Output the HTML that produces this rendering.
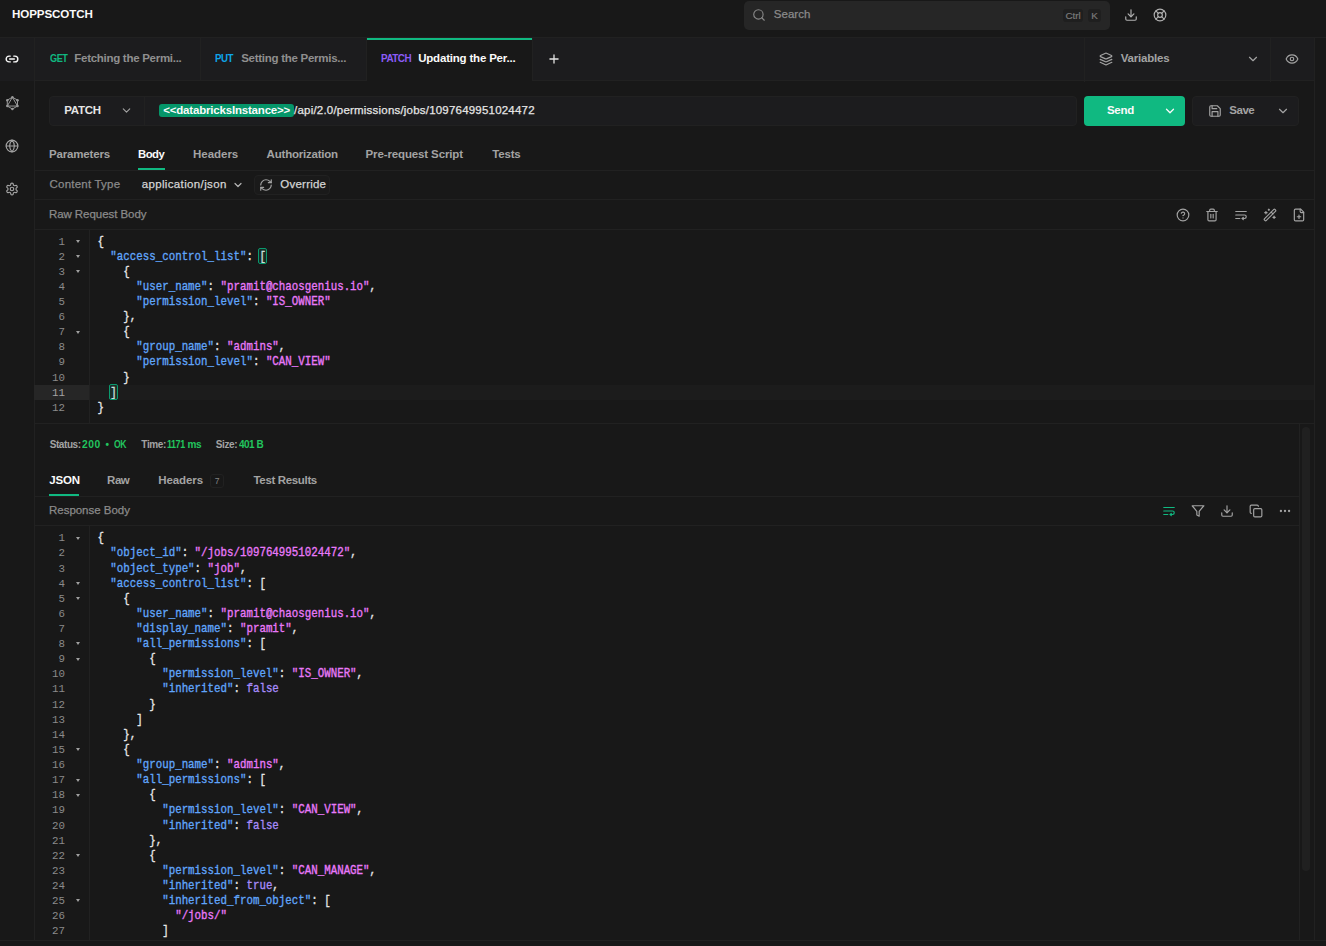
<!DOCTYPE html>
<html><head><meta charset="utf-8">
<style>
*{box-sizing:border-box;margin:0;padding:0}
html,body{width:1326px;height:946px;overflow:hidden;background:#181818;font-family:"Liberation Sans",sans-serif;color:#a3a3a3}
.abs{position:absolute}
svg{display:block;position:absolute}
/* header */
#hdr{left:0;top:0;width:1326px;height:38px;background:#181818;border-bottom:1px solid #212121}
#logo{left:12px;top:8px;font-size:12px;font-weight:bold;color:#fafafa;letter-spacing:-0.1px}
#search{left:744px;top:1px;width:366px;height:29px;background:#262626;border-radius:5px}
#search .t{left:30px;top:7px;font-size:11px;color:#8a8a8a}
.kbd{position:absolute;background:#1f1f1f;border-radius:3px;font-size:9.8px;color:#7a7a7a;text-align:center;line-height:14.4px;-webkit-text-stroke:0.2px #7a7a7a}
/* sidebar */
#side{left:0;top:38px;width:35px;height:902px;border-right:1px solid #212121;background:#181818}
#side .act{left:0;top:0;width:34px;height:43px;background:#1c1c1e}
/* tabbar */
#tabs{left:35px;top:38px;width:1279px;height:43px;background:#1c1c1e;border-bottom:1px solid #212121}
.tab{position:absolute;top:0;height:42px;border-right:1px solid #212121}
.tab .m{position:absolute;top:16px;font-size:9.5px;font-weight:bold}
.tab .n{position:absolute;top:14px;font-size:11px;font-weight:bold;color:#8c8c8c;white-space:nowrap}
#rcol{left:1314px;top:38px;width:12px;height:902px;border-left:1px solid #212121;background:#181818}
/* url row */
.box{position:absolute;background:#1c1c1e;border-radius:4px}
.lbl{position:absolute;font-size:11px;white-space:nowrap}
.b{font-weight:bold}
.hline{position:absolute;height:1px;background:#212121}
.vline{position:absolute;width:1px;background:#212121}
.uline{position:absolute;height:2px;background:#10b981}
/* editor */
.ed{position:absolute;font-family:"Liberation Mono",monospace;font-size:10.8px}
.ln{position:absolute;left:0;height:15.1px;line-height:15.1px;width:1279px;white-space:pre}
.ln .num{position:absolute;left:0;width:30px;text-align:right;color:#8a8a8a;transform:scaleY(1.05);transform-origin:0 10.4px}
.ln .fold{position:absolute;left:40.8px;top:5.3px;width:0;height:0;border-left:2.7px solid transparent;border-right:2.7px solid transparent;border-top:3.4px solid #a0a0a0}
.ln .code{position:absolute;left:62.4px;transform:scaleY(1.12);transform-origin:0 10.4px;-webkit-text-stroke:0.3px currentColor}
.ln.act{}
.cact{position:absolute;left:90px;top:385px;width:1224px;height:15px;background:#1c1c1c}
.gact{position:absolute;left:34px;top:385px;width:55px;height:15px;background:#262626}
.ln.act .num{color:#a3a3a3}
.k{color:#60a5fa}.s{color:#e879f9}.p{color:#e5e5e5}.ed .b{color:#a78bfa;font-weight:normal}
</style></head>
<body>
<div id="hdr" class="abs">
  <div id="search" class="abs">
    <svg style="left:8.3px;top:6.7px" width="14" height="14" viewBox="0 0 24 24" fill="none" stroke="#8a8a8a" stroke-width="1.9" stroke-linecap="round"><circle cx="11" cy="11" r="8"/><path d="m21 21-4.3-4.3"/></svg>
    <div class="kbd" style="left:319px;top:8px;width:20px;height:13px">Ctrl</div>
    <div class="kbd" style="left:344px;top:8px;width:13px;height:13px">K</div>
  </div>
  <svg style="left:1124px;top:8px" width="14" height="14" viewBox="0 0 24 24" fill="none" stroke="#b0b0b0" stroke-width="2" stroke-linecap="round" stroke-linejoin="round"><path d="M21 15v4a2 2 0 0 1-2 2H5a2 2 0 0 1-2-2v-4"/><polyline points="7 10 12 15 17 10"/><line x1="12" x2="12" y1="15" y2="3"/></svg>
  <svg style="left:1153px;top:8px" width="14" height="14" viewBox="0 0 24 24" fill="none" stroke="#b0b0b0" stroke-width="2" stroke-linecap="round" stroke-linejoin="round"><circle cx="12" cy="12" r="10"/><path d="m4.93 4.93 4.24 4.24"/><path d="m14.83 9.17 4.24-4.24"/><path d="m14.83 14.83 4.24 4.24"/><path d="m9.17 14.83-4.24 4.24"/><circle cx="12" cy="12" r="4"/></svg>
</div>

<div id="side" class="abs">
  <div class="act abs"></div>
  <svg style="left:5px;top:14px" width="14" height="14" viewBox="0 0 24 24" fill="none" stroke="#fafafa" stroke-width="2.4" stroke-linecap="round" stroke-linejoin="round"><path d="M9 17H7A5 5 0 0 1 7 7h2"/><path d="M15 7h2a5 5 0 1 1 0 10h-2"/><line x1="8" x2="16" y1="12" y2="12"/></svg>
  <svg style="left:0;top:52px" width="30" height="26" viewBox="0 90 30 26" fill="none" stroke="#9a9a9a" stroke-width="1"><path d="M12.40 97.20 17.51 100.15 17.51 106.05 12.40 109.00 7.29 106.05 7.29 100.15Z"/><path d="M12.40 97.20 17.51 106.05 7.29 106.05Z"/><g fill="#9a9a9a" stroke="none"><circle cx="12.40" cy="97.20" r="1.25"/><circle cx="17.51" cy="100.15" r="1.25"/><circle cx="17.51" cy="106.05" r="1.25"/><circle cx="12.40" cy="109.00" r="1.25"/><circle cx="7.29" cy="106.05" r="1.25"/><circle cx="7.29" cy="100.15" r="1.25"/></g></svg>
  <svg style="left:5px;top:101.2px" width="14" height="14" viewBox="0 0 24 24" fill="none" stroke="#a3a3a3" stroke-width="2" stroke-linecap="round" stroke-linejoin="round"><circle cx="12" cy="12" r="10"/><path d="M12 2a14.5 14.5 0 0 0 0 20 14.5 14.5 0 0 0 0-20"/><path d="M2 12h20"/></svg>
  <svg style="left:5px;top:144.2px" width="14" height="14" viewBox="0 0 24 24" fill="none" stroke="#a3a3a3" stroke-width="2" stroke-linecap="round" stroke-linejoin="round"><path d="M12.22 2h-.44a2 2 0 0 0-2 2v.18a2 2 0 0 1-1 1.73l-.43.25a2 2 0 0 1-2 0l-.15-.08a2 2 0 0 0-2.73.73l-.22.38a2 2 0 0 0 .73 2.730l.15.1a2 2 0 0 1 1 1.72v.51a2 2 0 0 1-1 1.74l-.15.09a2 2 0 0 0-.73 2.73l.22.38a2 2 0 0 0 2.73.73l.15-.08a2 2 0 0 1 2 0l.43.25a2 2 0 0 1 1 1.73V20a2 2 0 0 0 2 2h.44a2 2 0 0 0 2-2v-.18a2 2 0 0 1 1-1.73l.43-.25a2 2 0 0 1 2 0l.15.08a2 2 0 0 0 2.73-.73l.22-.39a2 2 0 0 0-.73-2.73l-.15-.08a2 2 0 0 1-1-1.74v-.5a2 2 0 0 1 1-1.74l.15-.09a2 2 0 0 0 .73-2.73l-.22-.38a2 2 0 0 0-2.73-.73l-.15.08a2 2 0 0 1-2 0l-.43-.25a2 2 0 0 1-1-1.73V4a2 2 0 0 0-2-2z"/><circle cx="12" cy="12" r="3"/></svg>
</div>

<div id="tabs" class="abs">
  <div class="tab" style="left:0;width:166px"></div>
  <div class="tab" style="left:166px;width:166px"></div>
  <div class="tab" style="left:332px;width:166px;height:43px;background:#181818"><div style="position:absolute;left:0;top:0;width:165px;height:2px;background:#10b981"></div></div>
  <svg style="left:512px;top:14.3px" width="14" height="14" viewBox="0 0 24 24" fill="none" stroke="#e5e5e5" stroke-width="2.2" stroke-linecap="round"><path d="M5 12h14"/><path d="M12 5v14"/></svg>
  <div class="vline" style="left:1049px;top:0;height:44px"></div>
  <svg style="left:1064.2px;top:13.6px" width="14" height="14" viewBox="0 0 24 24" fill="none" stroke="#a3a3a3" stroke-width="2" stroke-linecap="round" stroke-linejoin="round"><path d="m12.83 2.18a2 2 0 0 0-1.66 0L2.6 6.08a1 1 0 0 0 0 1.83l8.58 3.91a2 2 0 0 0 1.66 0l8.58-3.9a1 1 0 0 0 0-1.83Z"/><path d="m22 17.65-9.17 4.16a2 2 0 0 1-1.66 0L2 17.65"/><path d="m22 12.65-9.17 4.16a2 2 0 0 1-1.66 0L2 12.65"/></svg>
  <svg style="left:1211px;top:14px" width="14" height="14" viewBox="0 0 24 24" fill="none" stroke="#a3a3a3" stroke-width="2" stroke-linecap="round" stroke-linejoin="round"><path d="m6 9 6 6 6-6"/></svg>
  <div class="vline" style="left:1235px;top:0;height:44px"></div>
  <svg style="left:1250px;top:14px" width="14" height="14" viewBox="0 0 24 24" fill="none" stroke="#a3a3a3" stroke-width="2" stroke-linecap="round" stroke-linejoin="round"><path d="M2 12s3-7 10-7 10 7 10 7-3 7-10 7-10-7-10-7Z"/><circle cx="12" cy="12" r="3"/></svg>
</div>
<div id="rcol" class="abs"></div>

<!-- URL row -->
<div class="box" style="left:49px;top:96px;width:1028px;height:30px;border:1px solid #212121"></div>
<div class="vline" style="left:144px;top:96px;height:30px;background:#212121"></div>
<svg style="left:120px;top:104px" width="13" height="13" viewBox="0 0 24 24" fill="none" stroke="#a3a3a3" stroke-width="2" stroke-linecap="round" stroke-linejoin="round"><path d="m6 9 6 6 6-6"/></svg>
<div class="abs" style="left:159px;top:104px;width:135px;height:13px;background:#059669;border-radius:3px"></div>

<div class="abs" style="left:1084px;top:96px;width:101px;height:30px;background:#10b981;border-radius:4px"></div>
<svg style="left:1163px;top:104px" width="14" height="14" viewBox="0 0 24 24" fill="none" stroke="#fafafa" stroke-width="2.2" stroke-linecap="round" stroke-linejoin="round"><path d="m6 9 6 6 6-6"/></svg>
<div class="box" style="left:1192px;top:96px;width:107px;height:30px;border:1px solid #212121"></div>
<svg style="left:1208px;top:104px" width="14" height="14" viewBox="0 0 24 24" fill="none" stroke="#a3a3a3" stroke-width="2" stroke-linecap="round" stroke-linejoin="round"><path d="M19 21H5a2 2 0 0 1-2-2V5a2 2 0 0 1 2-2h11l5 5v11a2 2 0 0 1-2 2z"/><polyline points="17 21 17 13 7 13 7 21"/><polyline points="7 3 7 8 15 8"/></svg>
<svg style="left:1276px;top:104px" width="14" height="14" viewBox="0 0 24 24" fill="none" stroke="#a3a3a3" stroke-width="2" stroke-linecap="round" stroke-linejoin="round"><path d="m6 9 6 6 6-6"/></svg>

<!-- request tabs -->
<div class="hline" style="left:35px;top:170px;width:1279px"></div>
<div class="uline" style="left:138px;top:168px;width:27px"></div>

<svg style="left:231.5px;top:178.5px" width="12" height="12" viewBox="0 0 24 24" fill="none" stroke="#b5b5b5" stroke-width="2.4" stroke-linecap="round" stroke-linejoin="round"><path d="m6 9 6 6 6-6"/></svg>
<div class="abs" style="left:254px;top:175px;width:76px;height:20px;border:1px solid #212121;border-radius:4px;background:#1a1a1a"></div>
<svg style="left:259px;top:178px" width="14" height="14" viewBox="0 0 24 24" fill="none" stroke="#a3a3a3" stroke-width="2" stroke-linecap="round" stroke-linejoin="round"><path d="M3 12a9 9 0 0 1 9-9 9.75 9.75 0 0 1 6.740 2.74L21 8"/><path d="M21 3v5h-5"/><path d="M21 12a9 9 0 0 1-9 9 9.75 9.75 0 0 1-6.74-2.74L3 16"/><path d="M8 16H3v5"/></svg>
<div class="hline" style="left:35px;top:199px;width:1279px"></div>

<svg style="left:1176px;top:208px" width="14" height="14" viewBox="0 0 24 24" fill="none" stroke="#a3a3a3" stroke-width="2" stroke-linecap="round" stroke-linejoin="round"><circle cx="12" cy="12" r="10"/><path d="M9.09 9a3 3 0 0 1 5.83 1c0 2-3 3-3 3"/><path d="M12 17h.01"/></svg>
<svg style="left:1205px;top:208px" width="14" height="14" viewBox="0 0 24 24" fill="none" stroke="#a3a3a3" stroke-width="2" stroke-linecap="round" stroke-linejoin="round"><path d="M3 6h18"/><path d="M19 6v14c0 1-1 2-2 2H7c-1 0-2-1-2-2V6"/><path d="M8 6V4c0-1 1-2 2-2h4c1 0 2 1 2 2v2"/><line x1="10" x2="10" y1="11" y2="17"/><line x1="14" x2="14" y1="11" y2="17"/></svg>
<svg style="left:1234px;top:208px" width="14" height="14" viewBox="0 0 24 24" fill="none" stroke="#a3a3a3" stroke-width="2" stroke-linecap="round" stroke-linejoin="round"><line x1="3" x2="21" y1="6" y2="6"/><path d="M3 12h15a3 3 0 1 1 0 6h-4"/><polyline points="16 16 14 18 16 20"/><line x1="3" x2="10" y1="18" y2="18"/></svg>
<svg style="left:1263px;top:208px" width="14" height="14" viewBox="0 0 24 24" fill="none" stroke="#a3a3a3" stroke-width="2" stroke-linecap="round" stroke-linejoin="round"><path d="m21.64 3.64-1.28-1.28a1.21 1.21 0 0 0-1.72 0L2.36 18.64a1.21 1.21 0 0 0 0 1.72l1.28 1.28a1.2 1.2 0 0 0 1.72 0L21.64 5.36a1.2 1.2 0 0 0 0-1.720Z"/><path d="m14 7 3 3"/><path d="M5 6v4"/><path d="M19 14v4"/><path d="M10 2v2"/><path d="M7 8H3"/><path d="M21 16h-4"/><path d="M11 3H9"/></svg>
<svg style="left:1292px;top:208px" width="14" height="14" viewBox="0 0 24 24" fill="none" stroke="#a3a3a3" stroke-width="2" stroke-linecap="round" stroke-linejoin="round"><path d="M15 2H6a2 2 0 0 0-2 2v16a2 2 0 0 0 2 2h12a2 2 0 0 0 2-2V7Z"/><path d="M14 2v4a2 2 0 0 0 2 2h4"/><path d="M9 15h6"/><path d="M12 18v-6"/></svg>
<div class="hline" style="left:35px;top:229px;width:1279px"></div>

<!-- request editor -->
<div class="gact"></div><div class="cact"></div>
<div class="ed" style="left:35px;top:234.5px;width:1279px;height:189px">
<div class="ln" style="top:0.00px"><span class="num">1</span><span class="fold"></span><span class="code"><span class="p">{</span></span></div>
<div class="ln" style="top:15.12px"><span class="num">2</span><span class="fold"></span><span class="code">  <span class="k">&quot;access_control_list&quot;</span><span class="p">:</span> <span class="p">[</span></span></div>
<div class="ln" style="top:30.24px"><span class="num">3</span><span class="fold"></span><span class="code">    <span class="p">{</span></span></div>
<div class="ln" style="top:45.36px"><span class="num">4</span><span class="code">      <span class="k">&quot;user_name&quot;</span><span class="p">:</span> <span class="s">&quot;pramit@chaosgenius.io&quot;</span><span class="p">,</span></span></div>
<div class="ln" style="top:60.48px"><span class="num">5</span><span class="code">      <span class="k">&quot;permission_level&quot;</span><span class="p">:</span> <span class="s">&quot;IS_OWNER&quot;</span></span></div>
<div class="ln" style="top:75.60px"><span class="num">6</span><span class="code">    <span class="p">}</span><span class="p">,</span></span></div>
<div class="ln" style="top:90.72px"><span class="num">7</span><span class="fold"></span><span class="code">    <span class="p">{</span></span></div>
<div class="ln" style="top:105.84px"><span class="num">8</span><span class="code">      <span class="k">&quot;group_name&quot;</span><span class="p">:</span> <span class="s">&quot;admins&quot;</span><span class="p">,</span></span></div>
<div class="ln" style="top:120.96px"><span class="num">9</span><span class="code">      <span class="k">&quot;permission_level&quot;</span><span class="p">:</span> <span class="s">&quot;CAN_VIEW&quot;</span></span></div>
<div class="ln" style="top:136.08px"><span class="num">10</span><span class="code">    <span class="p">}</span></span></div>
<div class="ln act" style="top:151.20px"><span class="num">11</span><span class="code">  <span class="p">]</span></span></div>
<div class="ln" style="top:166.32px"><span class="num">12</span><span class="code"><span class="p">}</span></span></div>
</div>
<div class="vline" style="left:89px;top:230px;height:193px"></div>
<div class="abs" style="left:109px;top:384px;width:9px;height:16px;border:1px solid #0a9a6e;border-radius:2px;background:rgba(16,185,129,0.12)"></div>
<div class="abs" style="left:258px;top:248px;width:9px;height:16px;border:1px solid #0a9a6e;border-radius:2px;background:rgba(16,185,129,0.12)"></div>
<div class="hline" style="left:35px;top:423px;width:1279px"></div>

<!-- status -->

<!-- response tabs -->
<div class="abs" style="left:210px;top:474px;width:14px;height:14px;border:1px solid #212121;border-radius:3px;font-size:8.5px;color:#858585;text-align:center;line-height:12.5px">7</div>
<div class="uline" style="left:49px;top:494px;width:30px"></div>
<div class="hline" style="left:35px;top:496px;width:1264px"></div>

<svg style="left:1162px;top:504px" width="14" height="14" viewBox="0 0 24 24" fill="none" stroke="#10b981" stroke-width="2" stroke-linecap="round" stroke-linejoin="round"><line x1="3" x2="21" y1="6" y2="6"/><path d="M3 12h15a3 3 0 1 1 0 6h-4"/><polyline points="16 16 14 18 16 20"/><line x1="3" x2="10" y1="18" y2="18"/></svg>
<svg style="left:1191px;top:504px" width="14" height="14" viewBox="0 0 24 24" fill="none" stroke="#a3a3a3" stroke-width="2" stroke-linecap="round" stroke-linejoin="round"><polygon points="22 3 2 3 10 12.46 10 19 14 21 14 12.46 22 3"/></svg>
<svg style="left:1220px;top:504px" width="14" height="14" viewBox="0 0 24 24" fill="none" stroke="#a3a3a3" stroke-width="2" stroke-linecap="round" stroke-linejoin="round"><path d="M21 15v4a2 2 0 0 1-2 2H5a2 2 0 0 1-2-2v-4"/><polyline points="7 10 12 15 17 10"/><line x1="12" x2="12" y1="15" y2="3"/></svg>
<svg style="left:1249px;top:504px" width="14" height="14" viewBox="0 0 24 24" fill="none" stroke="#a3a3a3" stroke-width="2" stroke-linecap="round" stroke-linejoin="round"><rect width="14" height="14" x="8" y="8" rx="2" ry="2"/><path d="M4 16c-1.1 0-2-.9-2-2V4c0-1.1.9-2 2-2h10c1.1 0 2 .9 2 2"/></svg>
<svg style="left:1278px;top:504px" width="14" height="14" viewBox="0 0 24 24" fill="none" stroke="#a3a3a3" stroke-width="2" stroke-linecap="round" stroke-linejoin="round"><circle cx="12" cy="12" r="1"/><circle cx="19" cy="12" r="1"/><circle cx="5" cy="12" r="1"/></svg>
<div class="hline" style="left:35px;top:525px;width:1264px"></div>

<!-- response editor -->
<div class="ed" style="left:35px;top:531.3px;width:1264px;height:408.7px;overflow:hidden">
<div class="ln" style="top:0.00px"><span class="num">1</span><span class="fold"></span><span class="code"><span class="p">{</span></span></div>
<div class="ln" style="top:15.12px"><span class="num">2</span><span class="code">  <span class="k">&quot;object_id&quot;</span><span class="p">:</span> <span class="s">&quot;/jobs/1097649951024472&quot;</span><span class="p">,</span></span></div>
<div class="ln" style="top:30.24px"><span class="num">3</span><span class="code">  <span class="k">&quot;object_type&quot;</span><span class="p">:</span> <span class="s">&quot;job&quot;</span><span class="p">,</span></span></div>
<div class="ln" style="top:45.36px"><span class="num">4</span><span class="fold"></span><span class="code">  <span class="k">&quot;access_control_list&quot;</span><span class="p">:</span> <span class="p">[</span></span></div>
<div class="ln" style="top:60.48px"><span class="num">5</span><span class="fold"></span><span class="code">    <span class="p">{</span></span></div>
<div class="ln" style="top:75.60px"><span class="num">6</span><span class="code">      <span class="k">&quot;user_name&quot;</span><span class="p">:</span> <span class="s">&quot;pramit@chaosgenius.io&quot;</span><span class="p">,</span></span></div>
<div class="ln" style="top:90.72px"><span class="num">7</span><span class="code">      <span class="k">&quot;display_name&quot;</span><span class="p">:</span> <span class="s">&quot;pramit&quot;</span><span class="p">,</span></span></div>
<div class="ln" style="top:105.84px"><span class="num">8</span><span class="fold"></span><span class="code">      <span class="k">&quot;all_permissions&quot;</span><span class="p">:</span> <span class="p">[</span></span></div>
<div class="ln" style="top:120.96px"><span class="num">9</span><span class="fold"></span><span class="code">        <span class="p">{</span></span></div>
<div class="ln" style="top:136.08px"><span class="num">10</span><span class="code">          <span class="k">&quot;permission_level&quot;</span><span class="p">:</span> <span class="s">&quot;IS_OWNER&quot;</span><span class="p">,</span></span></div>
<div class="ln" style="top:151.20px"><span class="num">11</span><span class="code">          <span class="k">&quot;inherited&quot;</span><span class="p">:</span> <span class="b">false</span></span></div>
<div class="ln" style="top:166.32px"><span class="num">12</span><span class="code">        <span class="p">}</span></span></div>
<div class="ln" style="top:181.44px"><span class="num">13</span><span class="code">      <span class="p">]</span></span></div>
<div class="ln" style="top:196.56px"><span class="num">14</span><span class="code">    <span class="p">}</span><span class="p">,</span></span></div>
<div class="ln" style="top:211.68px"><span class="num">15</span><span class="fold"></span><span class="code">    <span class="p">{</span></span></div>
<div class="ln" style="top:226.80px"><span class="num">16</span><span class="code">      <span class="k">&quot;group_name&quot;</span><span class="p">:</span> <span class="s">&quot;admins&quot;</span><span class="p">,</span></span></div>
<div class="ln" style="top:241.92px"><span class="num">17</span><span class="fold"></span><span class="code">      <span class="k">&quot;all_permissions&quot;</span><span class="p">:</span> <span class="p">[</span></span></div>
<div class="ln" style="top:257.04px"><span class="num">18</span><span class="fold"></span><span class="code">        <span class="p">{</span></span></div>
<div class="ln" style="top:272.16px"><span class="num">19</span><span class="code">          <span class="k">&quot;permission_level&quot;</span><span class="p">:</span> <span class="s">&quot;CAN_VIEW&quot;</span><span class="p">,</span></span></div>
<div class="ln" style="top:287.28px"><span class="num">20</span><span class="code">          <span class="k">&quot;inherited&quot;</span><span class="p">:</span> <span class="b">false</span></span></div>
<div class="ln" style="top:302.40px"><span class="num">21</span><span class="code">        <span class="p">}</span><span class="p">,</span></span></div>
<div class="ln" style="top:317.52px"><span class="num">22</span><span class="fold"></span><span class="code">        <span class="p">{</span></span></div>
<div class="ln" style="top:332.64px"><span class="num">23</span><span class="code">          <span class="k">&quot;permission_level&quot;</span><span class="p">:</span> <span class="s">&quot;CAN_MANAGE&quot;</span><span class="p">,</span></span></div>
<div class="ln" style="top:347.76px"><span class="num">24</span><span class="code">          <span class="k">&quot;inherited&quot;</span><span class="p">:</span> <span class="b">true</span><span class="p">,</span></span></div>
<div class="ln" style="top:362.88px"><span class="num">25</span><span class="fold"></span><span class="code">          <span class="k">&quot;inherited_from_object&quot;</span><span class="p">:</span> <span class="p">[</span></span></div>
<div class="ln" style="top:378.00px"><span class="num">26</span><span class="code">            <span class="s">&quot;/jobs/&quot;</span></span></div>
<div class="ln" style="top:393.12px"><span class="num">27</span><span class="code">          <span class="p">]</span></span></div>
</div>
<div class="vline" style="left:89px;top:526px;height:414px"></div>
<div class="hline" style="left:0;top:940px;width:1326px"></div>

<!-- scrollbar -->
<div class="vline" style="left:1299px;top:424px;height:516px"></div>
<div class="abs" style="left:1302px;top:427px;width:8px;height:444px;background:#202020;border-radius:4px"></div>
<span class="lbl" style="left:11.97px;top:3.88px;font-size:11.6px;line-height:20px;font-weight:700;color:#fafafa;letter-spacing:-0.096px">HOPPSCOTCH</span>
<span class="lbl" style="left:773.84px;top:4.12px;font-size:11.5px;line-height:20px;font-weight:400;color:#8a8a8a;letter-spacing:0.014px;-webkit-text-stroke:0.25px #8a8a8a">Search</span>
<span class="lbl" style="left:49.61px;top:48.83px;font-size:10.0px;line-height:20px;font-weight:700;color:#10b981;letter-spacing:-0.500px;transform:scaleX(0.9153);transform-origin:0 0">GET</span>
<span class="lbl" style="left:74.28px;top:47.82px;font-size:11.5px;line-height:20px;font-weight:700;color:#8f8f8f;letter-spacing:-0.280px">Fetching the Permi...</span>
<span class="lbl" style="left:214.79px;top:49.03px;font-size:10.0px;line-height:20px;font-weight:700;color:#0ea5e9;letter-spacing:-0.500px;transform:scaleX(0.9695);transform-origin:0 0">PUT</span>
<span class="lbl" style="left:241.22px;top:47.72px;font-size:11.5px;line-height:20px;font-weight:700;color:#8f8f8f;letter-spacing:-0.270px">Setting the Permis...</span>
<span class="lbl" style="left:380.78px;top:48.83px;font-size:10.0px;line-height:20px;font-weight:700;color:#8b5cf6;letter-spacing:-0.500px;transform:scaleX(0.9907);transform-origin:0 0">PATCH</span>
<span class="lbl" style="left:418.16px;top:47.82px;font-size:11.5px;line-height:20px;font-weight:700;color:#fafafa;letter-spacing:-0.191px">Updating the Per...</span>
<span class="lbl" style="left:1120.80px;top:47.92px;font-size:11.5px;line-height:20px;font-weight:700;color:#a3a3a3;letter-spacing:-0.218px">Variables</span>
<span class="lbl" style="left:64.28px;top:100.02px;font-size:11.5px;line-height:20px;font-weight:700;color:#e5e5e5;letter-spacing:-0.269px">PATCH</span>
<span class="lbl" style="left:163.24px;top:100.42px;font-size:11.5px;line-height:20px;font-weight:700;color:#fafafa;letter-spacing:-0.189px">&lt;&lt;databricksInstance&gt;&gt;</span>
<span class="lbl" style="left:294.10px;top:99.82px;font-size:11.5px;line-height:20px;font-weight:400;color:#e5e5e5;letter-spacing:0.204px;-webkit-text-stroke:0.25px #e5e5e5">/api/2.0/permissions/jobs/1097649951024472</span>
<span class="lbl" style="left:1106.92px;top:99.82px;font-size:11.5px;line-height:20px;font-weight:700;color:#fafafa;letter-spacing:-0.267px">Send</span>
<span class="lbl" style="left:1229.32px;top:99.82px;font-size:11.5px;line-height:20px;font-weight:700;color:#a3a3a3;letter-spacing:-0.497px">Save</span>
<span class="lbl" style="left:49.08px;top:144.12px;font-size:11.5px;line-height:20px;font-weight:700;color:#a3a3a3;letter-spacing:-0.174px">Parameters</span>
<span class="lbl" style="left:137.89px;top:144.12px;font-size:11.5px;line-height:20px;font-weight:700;color:#fafafa;letter-spacing:-0.500px;transform:scaleX(0.9848);transform-origin:0 0">Body</span>
<span class="lbl" style="left:193.08px;top:144.12px;font-size:11.5px;line-height:20px;font-weight:700;color:#a3a3a3;letter-spacing:-0.034px">Headers</span>
<span class="lbl" style="left:266.62px;top:144.12px;font-size:11.5px;line-height:20px;font-weight:700;color:#a3a3a3;letter-spacing:-0.214px">Authorization</span>
<span class="lbl" style="left:365.58px;top:144.12px;font-size:11.5px;line-height:20px;font-weight:700;color:#a3a3a3;letter-spacing:-0.131px">Pre-request Script</span>
<span class="lbl" style="left:492.30px;top:144.12px;font-size:11.5px;line-height:20px;font-weight:700;color:#a3a3a3;letter-spacing:-0.205px">Tests</span>
<span class="lbl" style="left:49.56px;top:174.02px;font-size:11.5px;line-height:20px;font-weight:400;color:#8a8a8a;letter-spacing:0.209px;-webkit-text-stroke:0.25px #8a8a8a">Content Type</span>
<span class="lbl" style="left:141.64px;top:174.02px;font-size:11.5px;line-height:20px;font-weight:400;color:#d4d4d4;letter-spacing:0.362px;-webkit-text-stroke:0.25px #d4d4d4">application/json</span>
<span class="lbl" style="left:280.36px;top:173.92px;font-size:11.5px;line-height:20px;font-weight:400;color:#d4d4d4;letter-spacing:0.216px;-webkit-text-stroke:0.25px #d4d4d4">Override</span>
<span class="lbl" style="left:48.90px;top:203.82px;font-size:11.5px;line-height:20px;font-weight:400;color:#8a8a8a;letter-spacing:-0.056px;-webkit-text-stroke:0.25px #8a8a8a">Raw Request Body</span>
<span class="lbl" style="left:49.74px;top:434.64px;font-size:10.0px;line-height:20px;font-weight:700;color:#a3a3a3;letter-spacing:-0.434px">Status:</span>
<span class="lbl" style="left:82.48px;top:434.64px;font-size:10.0px;line-height:20px;font-weight:700;color:#22c55e;letter-spacing:0.500px;transform:scaleX(1.0255);transform-origin:0 0">200</span>
<span class="lbl" style="left:105.39px;top:434.64px;font-size:10.0px;line-height:20px;font-weight:700;color:#22c55e;letter-spacing:0.000px">•</span>
<span class="lbl" style="left:113.73px;top:434.64px;font-size:10.0px;line-height:20px;font-weight:700;color:#22c55e;letter-spacing:-0.500px;transform:scaleX(0.8620);transform-origin:0 0">OK</span>
<span class="lbl" style="left:141.30px;top:434.64px;font-size:10.0px;line-height:20px;font-weight:700;color:#a3a3a3;letter-spacing:-0.340px">Time:</span>
<span class="lbl" style="left:167.24px;top:434.64px;font-size:10.0px;line-height:20px;font-weight:700;color:#22c55e;letter-spacing:-0.500px;transform:scaleX(0.9006);transform-origin:0 0">1171</span>
<span class="lbl" style="left:187.47px;top:434.64px;font-size:10.0px;line-height:20px;font-weight:700;color:#22c55e;letter-spacing:-0.423px">ms</span>
<span class="lbl" style="left:215.74px;top:434.64px;font-size:10.0px;line-height:20px;font-weight:700;color:#a3a3a3;letter-spacing:-0.388px">Size:</span>
<span class="lbl" style="left:238.90px;top:434.64px;font-size:10.0px;line-height:20px;font-weight:700;color:#22c55e;letter-spacing:-0.500px;transform:scaleX(0.9984);transform-origin:0 0">401 B</span>
<span class="lbl" style="left:49.20px;top:469.82px;font-size:11.5px;line-height:20px;font-weight:700;color:#fafafa;letter-spacing:-0.153px">JSON</span>
<span class="lbl" style="left:107.08px;top:469.82px;font-size:11.5px;line-height:20px;font-weight:700;color:#a3a3a3;letter-spacing:-0.483px">Raw</span>
<span class="lbl" style="left:158.28px;top:469.82px;font-size:11.5px;line-height:20px;font-weight:700;color:#a3a3a3;letter-spacing:-0.084px">Headers</span>
<span class="lbl" style="left:253.50px;top:469.82px;font-size:11.5px;line-height:20px;font-weight:700;color:#a3a3a3;letter-spacing:-0.342px">Test Results</span>
<span class="lbl" style="left:49.00px;top:500.02px;font-size:11.5px;line-height:20px;font-weight:400;color:#8a8a8a;letter-spacing:-0.024px;-webkit-text-stroke:0.25px #8a8a8a">Response Body</span>
</body></html>
